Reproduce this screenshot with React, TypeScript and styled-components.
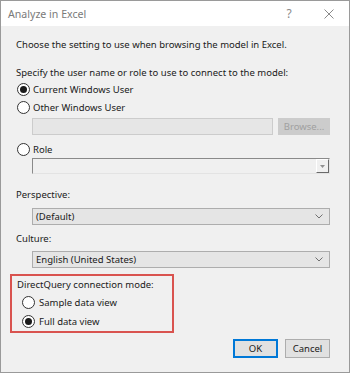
import React from "react";
import styled, { createGlobalStyle } from "styled-components";

const Global = createGlobalStyle`
  html, body { margin: 0; padding: 0; background: #ffffff; }
  body { font-family: "Noto Sans", "Open Sans", sans-serif; }
`;

const Dialog = styled.div`
  width: 350px;
  height: 373px;
  box-sizing: border-box;
  border: 1px solid #9a9a9a;
  background: #f0f0f0;
  display: flex;
  flex-direction: column;
  font-size: 9.5px;
  color: #1a1a1a;
`;

const TitleBar = styled.div`
  height: 25px;
  background: #ffffff;
  display: flex;
  align-items: center;
  padding: 0 0 0 7px;
  color: #7a7a7a;
  font-size: 10.6px;
`;

const TitleText = styled.div`
  flex: 1;
`;

const TitleButton = styled.div<{ $w: number }>`
  width: ${(p) => p.$w}px;
  display: flex;
  align-items: center;
  justify-content: center;
  color: #8a8a8a;
  font-size: 12px;
`;

const Body = styled.div`
  display: flex;
  flex-direction: column;
  padding: 0 0 0 15px;
`;

const Label = styled.div<{ $mt: number; $h?: number }>`
  margin-top: ${(p) => p.$mt}px;
  height: ${(p) => p.$h ?? 14}px;
  line-height: ${(p) => p.$h ?? 14}px;
  white-space: nowrap;
`;

const RadioRow = styled.label<{ $mt?: number; $ml?: number; $gap?: number }>`
  display: flex;
  align-items: center;
  height: 18px;
  margin-top: ${(p) => p.$mt ?? 0}px;
  margin-left: ${(p) => p.$ml ?? 1}px;
  gap: ${(p) => p.$gap ?? 3}px;
  white-space: nowrap;
`;

const RadioCircle = styled.span<{ $checked?: boolean }>`
  width: 13px;
  height: 13px;
  box-sizing: border-box;
  border: 1px solid #333333;
  border-radius: 50%;
  background: #ffffff;
  display: flex;
  align-items: center;
  justify-content: center;
  &::after {
    content: "";
    width: 7px;
    height: 7px;
    border-radius: 50%;
    background: ${(p) => (p.$checked ? "#1a1a1a" : "transparent")};
  }
`;

const Indented = styled.div<{ $mt: number }>`
  display: flex;
  margin-top: ${(p) => p.$mt}px;
  margin-left: 16px;
  gap: 5px;
  width: 298px;
`;

const DisabledInput = styled.div`
  flex: 1;
  height: 17px;
  box-sizing: border-box;
  border: 1px solid #cccccc;
  background: #e6e6e6;
`;

const BrowseButton = styled.div`
  width: 52px;
  height: 17px;
  box-sizing: border-box;
  border: 1px solid #cccccc;
  background: #cccccc;
  color: #a0a0a0;
  display: flex;
  align-items: center;
  justify-content: center;
  font-size: 9.5px;
`;

const SunkenCombo = styled.div`
  flex: 1;
  height: 16px;
  box-sizing: border-box;
  border-top: 1px solid #8a8a8a;
  border-left: 1px solid #8a8a8a;
  border-right: 1px solid #e3e3e3;
  border-bottom: 1px solid #e3e3e3;
  background: #f0f0f0;
  display: flex;
  justify-content: flex-end;
  align-items: stretch;
`;

const ComboArrowBox = styled.div`
  width: 13px;
  box-sizing: border-box;
  border-top: 1px solid #ffffff;
  border-left: 1px solid #ffffff;
  border-right: 1px solid #6a6a6a;
  border-bottom: 1px solid #6a6a6a;
  background: #f0f0f0;
  display: flex;
  align-items: center;
  justify-content: center;
`;

const Select = styled.div<{ $mt: number }>`
  margin-top: ${(p) => p.$mt}px;
  margin-left: 16px;
  width: 298px;
  height: 17px;
  box-sizing: border-box;
  border: 1px solid #adadad;
  background: #e5e5e5;
  display: flex;
  align-items: center;
  padding: 0 6px 0 3px;
`;

const SelectText = styled.div`
  flex: 1;
  white-space: nowrap;
`;

const HighlightBox = styled.div`
  margin-top: 6px;
  margin-left: -6px;
  width: 164px;
  height: 59px;
  box-sizing: border-box;
  border: 2px solid #d9534f;
  display: flex;
  flex-direction: column;
  padding-left: 5px;
`;

const ButtonRow = styled.div`
  margin-top: 6px;
  display: flex;
  justify-content: flex-end;
  gap: 7px;
  padding-right: 19px;
`;

const Button = styled.div<{ $primary?: boolean }>`
  width: 45px;
  height: 19px;
  box-sizing: border-box;
  border: ${(p) => (p.$primary ? "2px solid #0078d7" : "1px solid #adadad")};
  background: #e1e1e1;
  display: flex;
  align-items: center;
  justify-content: center;
`;

const Chevron = () => (
  <svg width="8" height="5" viewBox="0 0 8 5">
    <path d="M0.5 0.5 L4 4 L7.5 0.5" fill="none" stroke="#707070" strokeWidth="1" />
  </svg>
);

const SmallTriangle = () => (
  <svg width="5" height="3" viewBox="0 0 5 3">
    <path d="M0 0 L5 0 L2.5 3 Z" fill="#909090" />
  </svg>
);

const CloseIcon = () => (
  <svg width="10" height="10" viewBox="0 0 10 10">
    <path d="M0.5 0.5 L9.5 9.5 M9.5 0.5 L0.5 9.5" stroke="#8a8a8a" strokeWidth="1" />
  </svg>
);

export default function App() {
  return (
    <>
      <Global />
      <Dialog>
        <TitleBar>
          <TitleText>Analyze in Excel</TitleText>
          <TitleButton $w={40}>?</TitleButton>
          <TitleButton $w={40}>
            <CloseIcon />
          </TitleButton>
        </TitleBar>
        <Body>
          <Label $mt={11} $h={16}>Choose the setting to use when browsing the model in Excel.</Label>
          <Label $mt={13}>Specify the user name or role to use to connect to the model:</Label>
          <RadioRow>
            <RadioCircle $checked />
            Current Windows User
          </RadioRow>
          <RadioRow>
            <RadioCircle />
            Other Windows User
          </RadioRow>
          <Indented $mt={2}>
            <DisabledInput />
            <BrowseButton>Browse...</BrowseButton>
          </Indented>
          <RadioRow $mt={5}>
            <RadioCircle />
            Role
          </RadioRow>
          <Indented $mt={0}>
            <SunkenCombo>
              <ComboArrowBox>
                <SmallTriangle />
              </ComboArrowBox>
            </SunkenCombo>
          </Indented>
          <Label $mt={14}>Perspective:</Label>
          <Select $mt={6}>
            <SelectText>(Default)</SelectText>
            <Chevron />
          </Select>
          <Label $mt={7}>Culture:</Label>
          <Select $mt={5}>
            <SelectText>English (United States)</SelectText>
            <Chevron />
          </Select>
          <HighlightBox>
            <Label $mt={2}>DirectQuery connection mode:</Label>
            <RadioRow $mt={1} $ml={5} $gap={4}>
              <RadioCircle />
              Sample data view
            </RadioRow>
            <RadioRow $mt={1} $ml={5} $gap={4}>
              <RadioCircle $checked />
              Full data view
            </RadioRow>
          </HighlightBox>
          <ButtonRow>
            <Button $primary>OK</Button>
            <Button>Cancel</Button>
          </ButtonRow>
        </Body>
      </Dialog>
    </>
  );
}
